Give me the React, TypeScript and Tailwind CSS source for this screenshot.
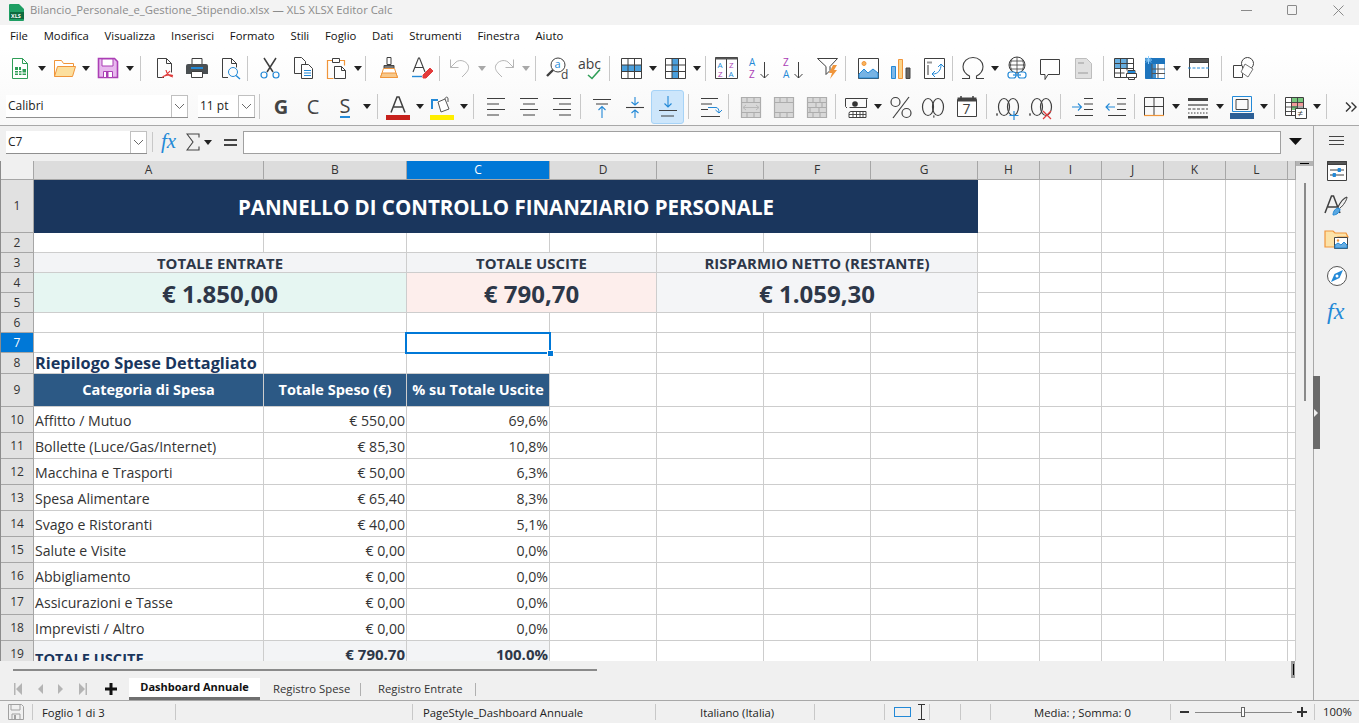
import React from "react";

const D = "#3f3f3f", B = "#2389d7", O = "#f0953a", P = "#ab3fb5", G = "#2f9e57", R = "#e03b3b", N = "#b5b5b5";

const Ico = ({ children, w = 24, h = 24 }: { children?: React.ReactNode; w?: number; h?: number }) => (
  <svg width={w} height={h} viewBox={`0 0 ${w} ${h}`} fill="none" stroke={D} strokeWidth={1} className="overflow-visible">
    {children}
  </svg>
);

const T = ({ x, y, s = 10, c = D, b, children, i, f }: { x: number; y: number; s?: number; c?: string; b?: boolean; children: string; i?: boolean; f?: string }) => (
  <text x={x} y={y} fontSize={s} fill={c} stroke="none" fontWeight={b ? 700 : 400} fontStyle={i ? "italic" : "normal"} fontFamily={f || "'Open Sans',sans-serif"}>
    {children}
  </text>
);

const Btn = ({ children, className = "w-[33px]" }: { children?: React.ReactNode; className?: string }) => (
  <div className={`flex h-[30px] shrink-0 items-center justify-center ${className}`}>{children}</div>
);
const Dd = ({ off }: { off?: boolean }) => (
  <div className="flex h-[30px] w-[11px] shrink-0 items-center justify-center">
    <svg width="8" height="5" viewBox="0 0 8 5"><path d="M0 0h8L4 5z" fill={off ? "#a8a8a8" : "#222"} /></svg>
  </div>
);
const Sep = () => <div className="h-[25px] w-px shrink-0 bg-[#c8c8c8]" />;
const Grp = ({ className, children }: { className: string; children?: React.ReactNode }) => (
  <div className={`flex shrink-0 items-center ${className}`}>{children}</div>
);

/* ---- toolbar 1 icons ---- */
const INew = () => (<Ico><path d="M4.5 2.5h10l5 5v15h-15z" stroke={G} fill="#fff" /><path d="M14.5 2.5v5h5" stroke={G} /><path d="M7 11h6v3H7zM7 15h11v4H7zM14 13h4v2h-4z" fill={G} stroke="none" /><path d="M7 17h11M10.5 11v8M14 11v8" stroke="#fff" /></Ico>);
const IOpen = () => (<Ico><path d="M2.5 20.5V4.5h7l2 3h10v3" stroke={O} fill="#fff" /><path d="M2.5 20.5l3-10h18l-3 10z" stroke={O} fill="#fcdf9e" /></Ico>);
const ISave = () => (<Ico><path d="M2.5 2.5h16l3 3v16h-19z" stroke={P} strokeWidth={1.6} fill="#e8b9ee" /><path d="M6 3h11v7H6z" fill="#fff" stroke={P} /><path d="M7.5 15.5h9v6h-9z" fill="#fff" stroke={P} /><path d="M10 16h2.5v5H10z" fill={P} stroke="none" /></Ico>);
const IPdf = () => (<Ico><path d="M12 21.5H5.5v-19h9l5 5v9" /><path d="M14.5 2.5v5h5" /><path d="M18 15c-2 3-5 5-8 6.5M14 14c.5 3 3 6 7 7M11 20.5c3-1.5 7-2 10-1" stroke={R} strokeWidth={1.2} /></Ico>);
const IPrint = () => (<Ico><path d="M7 2.5h10v6H7z" /><path d="M3 8h18a2 2 0 0 1 2 2v8H1v-8a2 2 0 0 1 2-2z" fill="#4a4f52" stroke="none" /><path d="M6 11h12v2H6z" fill={B} stroke="none" /><path d="M6.5 15.5h11v6h-11z" fill="#fff" /></Ico>);
const IPrev = () => (<Ico><path d="M10 21.5H4.5v-19h9l5 5v4" /><path d="M13.5 2.5v5h5" /><circle cx="15" cy="16" r="4.5" stroke={B} /><path d="M18 19.5l4 3.5" stroke={B} strokeWidth={1.4} /></Ico>);
const ICut = () => (<Ico><path d="M6 2l9 14M18 2L9 16" strokeWidth={1.5} /><circle cx="6" cy="19" r="3" stroke={B} strokeWidth={1.2} /><circle cx="18" cy="19" r="3" stroke={B} strokeWidth={1.2} /></Ico>);
const ICopy = () => (<Ico><path d="M10 17.5H3.5v-16h7l4 4v3" /><path d="M10.5 8.5h7l4 4v10h-11z" fill="#fff" /><path d="M13 14.5h7M13 17h7M13 19.5h7" stroke={B} /></Ico>);
const IPaste = () => (<Ico><path d="M9 4.5H3.5v18h6M15 4.5h5.5v5" stroke={O} strokeWidth={1.2} /><path d="M8.5 2.5h7v4h-7z" fill="#fff" /><path d="M10.5 10.5h7l4 4v8h-11z" fill="#fff" /><path d="M17.5 10.5v4h4" /></Ico>);
const IBrush = () => (<Ico><path d="M10 1.5h4v7h-4z" fill="#fff" /><path d="M7 9.5h10v3H7z" fill="#777" stroke="#444" /><path d="M6.5 12.5h11l3 9h-17z" stroke={O} fill="#fff" /><path d="M5 17h14l1.5 4.5h-17z" fill="#f8c88a" stroke={O} /></Ico>);
const IClear = () => (<Ico><path d="M3 16L8.500 2h1L15 16M5 11.500h8" strokeWidth={1.100} /><path d="M2 20.500h10" stroke={B} strokeWidth={1.400} /><path d="M13 19l7-7 3 3-7 7h-3z" fill="#e33b3b" stroke="#e33b3b" /></Ico>);
const IUndo = ({ flip }: { flip?: boolean }) => (<Ico><g transform={flip ? "translate(24 0) scale(-1 1)" : undefined} stroke={N}><path d="M2.500 3.500v8h8" /><path d="M2.500 11.500L8 6c4-3 10-1 12 3 1.500 3 0 6-3 9l-3 3" /></g></Ico>);
const IFind = () => (<Ico><circle cx="12" cy="9" r="7" fill="#fff" /><T x={8.500} y={12} s={11} c={B}>a</T><path d="M7 14l-6 6" strokeWidth={2.400} /><T x={15} y={23} s={12}>d</T></Ico>);
const ISpell = () => (<Ico><T x={-1} y={13} s={14}>abc</T><path d="M9 19l4 3.500 8-9" stroke={G} strokeWidth={1.600} /></Ico>);
const ITable = ({ row }: { row?: boolean }) => (<Ico><path d="M2.500 2.500h20v20h-20z" fill="#fff" />{row ? <path d="M3 9h19v6.500H3z" fill="#4a9fdc" stroke="none" /> : <path d="M9 3h6.500v19H9z" fill="#4a9fdc" stroke="none" />}<path d="M2.500 9h20M2.500 15.500h20M9 2.500v20M15.500 2.500v20" /></Ico>);
const ISort = () => (<Ico><path d="M.5 1.500h22v21H.5z" fill="#fff" /><path d="M.5 1.500h22v2H.5z" fill="#555" stroke="none" /><path d="M11.500 3v19" /><T x={2.500} y={12} s={8} c={B}>A</T><T x={3} y={21} s={8} c={P}>Z</T><T x={14} y={12} s={8} c={P}>Z</T><T x={13.500} y={21} s={8} c={B}>A</T></Ico>);
const IAz = ({ rev }: { rev?: boolean }) => (<Ico><T x={1} y={10} s={10} c={rev ? P : B}>{rev ? "Z" : "A"}</T><T x={1} y={22} s={10} c={rev ? B : P}>{rev ? "A" : "Z"}</T><path d="M16.500 6v16M12.500 18l4 4 4-4" /></Ico>);
const IFilter = () => (<Ico><path d="M1.500 2.500h20l-7.500 8v4l-4 4v-8z" fill="#fff" /><path d="M17 9l-4 8h3l-2 6 7-9h-3l3-5z" fill={O} stroke="none" /></Ico>);
const IImage = () => (<Ico><path d="M2.500 2.500h20v20h-20z" fill="#fff" /><circle cx="8" cy="7.500" r="2" fill="#f9b45c" stroke={O} /><path d="M3 22v-4l5-5 4 4 5-4 5 4v5z" fill="#76b3e4" stroke={B} /></Ico>);
const IChart = () => (<Ico><path d="M2.500 10.500h4v12h-4z" fill="#7db7e8" stroke={B} /><path d="M9.500 3.500h4v19h-4z" fill="#fbd48a" stroke={O} /><path d="M17 12h4v10.500h-4z" fill="#666" stroke="#444" /></Ico>);
const IPivot = () => (<Ico><path d="M2.500 2.500h20v20h-20z" fill="#fff" /><path d="M5 5.500h5v2H5zM5 9v10h2V9z" fill="#9a9a9a" stroke="none" /><path d="M11 18c5 0 8-4 8-9M16 11l3-3 3 3M13 15l-3 3 3 3" stroke={B} /></Ico>);
const IOmega = () => (<Ico><path d="M1 22.500h7.500v-2.500c-4-2-6.500-5-6.500-9.500a10 9 0 0 1 20 0c0 4.500-2.500 7.500-6.500 9.500v2.500H23" strokeWidth={1.100} /></Ico>);
const ILink = () => (<Ico><circle cx="12" cy="9" r="8" /><path d="M4 9h16M12 1v16M7 3c-2 4-2 8 0 12M17 3c2 4 2 8 0 12M5 5h14M5 13h14" strokeWidth={0.8} /><rect x="3" y="16" width="8" height="6" rx="2.500" fill="#fff" stroke={B} strokeWidth={1.200} /><rect x="13" y="16" width="8" height="6" rx="2.500" fill="#fff" stroke={B} strokeWidth={1.200} /><path d="M8 19h8" stroke={B} strokeWidth={1.200} /></Ico>);
const IComment = () => (<Ico><path d="M2.500 3.500h19v15H10l-3 5v-5H2.500z" fill="#fff" /></Ico>);
const INote = () => (<Ico><path d="M4.500 2.500h11l5 5v15h-16z" fill="#e0e0e0" stroke="#bdbdbd" /><path d="M7 7h6M7 17h10" stroke="#bdbdbd" strokeWidth={2} /></Ico>);
const IArea = () => (<Ico><path d="M1.500 2.500h19v19h-19z" fill="#fff" /><path d="M2 3h13v9H2z" fill="#66addf" stroke="none" /><path d="M1.500 7.500h19M1.500 12.500h19M1.500 17h10M7.500 2.500v19M14 2.500v12" /><path d="M13.500 17.500h10v4h-10z" fill="#fff" /><path d="M15 14.500h7v3h-7z" fill="#fff" /><path d="M15 15h7v2h-7z" fill={B} stroke="none" /><path d="M15.500 21.500h6v2h-6z" fill="#fff" /></Ico>);
const IFreeze = () => (<Ico><path d="M1.500 2.500h19v20h-19z" fill="#1d74bd" stroke="#1d74bd" /><path d="M8 8h12.500v14H8z" fill="#fff" stroke="none" /><path d="M8 8h4v14H8z" fill="#3d8fd0" stroke="none" /><path d="M8 13h13M8 17.500h13M14 8v14M8 8v14" stroke="#555" /><path d="M1 4h7M4.500 0v8M2 1.500l5 5M7 1.500l-5 5" stroke="#8fd0ff" /></Ico>);
const ISplit = () => (<Ico><path d="M2.500 2.500h19v19h-19z" fill="#fff" /><path d="M2.500 2.500h19v4h-19z" fill="#555" /><path d="M1 12h22" stroke={B} strokeDasharray="3 1.500" /></Ico>);
const IShapes = () => (<Ico><path d="M1.500 9.500h9v12h-9z" fill="#fff" /><circle cx="15.500" cy="7.500" r="6" fill="#fff" /><path d="M13 8l8 5-5 8-7-5z" fill="#fff" stroke="#777" /></Ico>);

/* ---- toolbar 2 icons ---- */
const ITextA = () => (<Ico><path d="M5 17.500L11 2h2l6 15.500M7.500 12h9" strokeWidth={1.500} /><path d="M0 20h24v5H0z" fill="#c7211c" stroke="none" /></Ico>);
const IFill = () => (<Ico><path d="M2 14V5h6" stroke={B} strokeWidth={2} /><path d="M8 7l7-3 4 10-8 3z" fill="#fff" stroke="#555" /><path d="M15 4c0-2 3-3 3 0v3" stroke="#555" /><path d="M0 20h24v5H0z" fill="#ffee00" stroke="none" /></Ico>);
const Lines = ({ d, d2 }: { d: string; d2?: string }) => (<Ico><path d={d} strokeWidth={1.100} />{d2 && <path d={d2} stroke={B} strokeWidth={1.100} />}</Ico>);
const IWrap = () => (<Ico><path d="M3 3.500h17M3 9h11M3 14.500h7M3 21.500h19" /><path d="M10 12.500h8c2 0 3 2 3 5M17.500 15l3.500 3 3-3" stroke={B} /></Ico>);
const IMerge = ({ v }: { v: number }) => (<Ico><path d="M2.500 2.500h19v20h-19z" fill="#d8d8d8" stroke="#adadad" strokeWidth={1.200} />
  <path d={v === 2 ? "M2.500 7.500h19M2.500 12.500h19M2.500 17.500h19M8 2.500v5M15 2.500v5M11 7.500v5M17 7.500v5M5 12.500v5M14 12.500v5M8 17.500v5M15 17.500v5" : "M2.500 7.500h19M2.500 17.500h19M8 2.500v5M15 2.500v5M8 17.500v5M15 17.500v5"} stroke="#adadad" strokeWidth={1.100} />
  {v === 0 && <path d="M4 12.500h16M7 10l-3 2.500L7 15M17 10l3 2.500-3 2.500" stroke="#b8b8b8" fill="none" />}</Ico>);
const ICur = () => (<Ico><path d="M1.500 3.500h22l-1 1v8h-17" /><path d="M1.500 3.500v8l1.500 1.500" /><circle cx="11" cy="9" r="2.800" fill="#333" stroke="none" /><path d="M5 22.500v-4a2 2 0 0 1 2-2h15v6z" fill="#fff" /><path d="M9 16.500v6M12.500 16.500v6M16 16.500v6M19 16.500v6M5 19.500h17" strokeWidth={0.900} /></Ico>);
const IPct = () => (<Ico><circle cx="6.500" cy="7" r="4.500" strokeWidth={1.200} /><circle cx="17.500" cy="18" r="4.500" strokeWidth={1.200} /><path d="M20 2L4 23" strokeWidth={1.200} /></Ico>);
const Zero = ({ x }: { x: number }) => <ellipse cx={x} cy="12" rx="5.500" ry="8.500" strokeWidth={1.200} />;
const IDec = ({ add, del }: { add?: boolean; del?: boolean }) => (
  <Ico>
    {add || del ? (<><path d="M0 19h2M0 20h2" stroke="#444" /><Zero x={8} /><Zero x={17} /></>) : (<><Zero x={6} /><Zero x={16} /><path d="M11 21h1.500M11 22h1.500" stroke="#444" /></>)}
    {add && <path d="M18 16v9M13.500 20.500h9" stroke={B} strokeWidth={1.200} />}
    {del && <path d="M14 16l8 8M22 16l-8 8" stroke={R} strokeWidth={1.200} />}
  </Ico>
);
const ICal = () => (<Ico><path d="M2.500 4.500h19v17h-19z" fill="#fff" /><path d="M2.500 2.500h19v4h-19z" fill="#444" stroke="none" /><path d="M6 1v4M18 1v4" strokeWidth={1.500} /><T x={7.500} y={19} s={14}>7</T></Ico>);
const IBorder = () => (<Ico><path d="M2.500 2.500h19v18h-19zM12 2.500v18M2.500 11.500h19" /><path d="M2 20.500h20" stroke={O} strokeWidth={1.200} /></Ico>);
const IBStyle = () => (<Ico><path d="M2 3h20v3H2z" fill="#444" stroke="none" /><path d="M2 10h20" strokeWidth={1.200} /><path d="M2 14h20" strokeDasharray="3 1.500" /><path d="M2 18h20" strokeDasharray="1.500 1.500" /><path d="M2 21h20v2.500H2z" fill="#444" stroke="none" /></Ico>);
const IBColor = () => (<Ico><path d="M2.500 1.500h19v15h-19z" stroke={B} /><path d="M6 4.500h12v10H6z" stroke="#444" /><path d="M0 18h24v6H0z" fill="#2c5f96" stroke="none" /></Ico>);
const ICond = () => (<Ico><path d="M2.500 2.500h18v18h-18z" fill="#fff" /><path d="M9 3h11v4H9z" fill="#79c97f" stroke="none" /><path d="M9 7h11v4H9z" fill="#f29b9b" stroke="none" /><path d="M9 11h5v4H9z" fill="#79c97f" stroke="none" /><path d="M9 7h-.5v13" stroke="#e33" /><path d="M2.500 7.500h18M2.500 12h18M2.500 16.500h18M8.500 2.500v18M14.500 2.500v18" strokeWidth={0.900} /><path d="M12.500 13.500h11v10h-11z" fill="#fff" /><T x={14.500} y={22} s={10}>≠</T></Ico>);
const Chev = () => (<svg width="11" height="7" viewBox="0 0 11 7" fill="none" stroke="#6a6a6a"><path d="M1 1l4.500 4.500L10 1" /></svg>);
const Combo = ({ w, children, btn = "w-[17px]" }: { w: string; children: string; btn?: string }) => (
  <div className={`flex h-[23px] shrink-0 items-stretch border-b border-[#8f8f8f] bg-white ${w}`}>
    <div className="flex flex-1 items-center pl-[2px] text-[12px] text-[#222]">{children}</div>
    <div className={`flex items-center justify-center border border-b-0 border-[#c0c0c0] ${btn}`}><Chev /></div>
  </div>
);

/* ---- sheet ---- */
const cell = "border-r border-b border-[#cdcdcd] min-w-0 overflow-hidden whitespace-nowrap";
const Blank = ({ n }: { n: number }) => (<>{Array.from({ length: n }, (_, i) => <div key={i} className={cell} />)}</>);
const Hdr = ({ n, on, className = "" }: { n: number; on?: boolean; className?: string }) => (
  <div className={`flex items-center justify-center border-r border-b border-[#a6a6a6] text-[12px] ${on ? "bg-[#0078d7] text-white" : "bg-[#e1e1e1] text-[#333]"} ${className}`}>{n}</div>
);
const Colh = ({ c, on }: { c: string; on?: boolean }) => (
  <div className={`flex items-center justify-center border-r border-b border-[#a6a6a6] text-[12px] ${on ? "bg-[#0078d7] text-white" : "bg-[#dcdcdc] text-[#333]"}`}>{c}</div>
);

const rows: [number, string, string, string][] = [
  [10, "Affitto / Mutuo", "€ 550,00", "69,6%"],
  [11, "Bollette (Luce/Gas/Internet)", "€ 85,30", "10,8%"],
  [12, "Macchina e Trasporti", "€ 50,00", "6,3%"],
  [13, "Spesa Alimentare", "€ 65,40", "8,3%"],
  [14, "Svago e Ristoranti", "€ 40,00", "5,1%"],
  [15, "Salute e Visite", "€ 0,00", "0,0%"],
  [16, "Abbigliamento", "€ 0,00", "0,0%"],
  [17, "Assicurazioni e Tasse", "€ 0,00", "0,0%"],
  [18, "Imprevisti / Altro", "€ 0,00", "0,0%"],
];

const Sheet = () => (
  <div className="relative h-[500px] w-[1296px] shrink-0 overflow-hidden border-l border-[#8c8c8c] bg-white font-['Open_Sans',sans-serif]">
    <div className="grid grid-cols-[33px_230px_143px_143px_107px_107px_107px_107px_62px_62px_62px_62px_62px_8px] grid-rows-[19px_53px_20px_20px_20px_20px_20px_20px_21px_33px_26px_26px_26px_26px_26px_26px_26px_26px_26px_26px]">
      <div className="border-r border-b border-[#a6a6a6] bg-[#f0f0f0]" />
      {["A", "B", "C", "D", "E", "F", "G", "H", "I", "J", "K", "L", ""].map((c) => <Colh key={c} c={c} on={c === "C"} />)}

      <Hdr n={1} />
      <div className="col-span-7 flex items-center justify-center bg-[#1a365d] pt-[1px] text-[20.500px] font-bold text-white">PANNELLO DI CONTROLLO FINANZIARIO PERSONALE</div>
      <Blank n={6} />

      <Hdr n={2} /><Blank n={13} />

      <Hdr n={3} />
      <div className={`col-span-2 flex items-center justify-center bg-[#f3f4f6] pt-[1px] text-[14.900px] font-bold text-[#2d3748] ${cell}`}>TOTALE ENTRATE</div>
      <div className={`col-span-2 flex items-center justify-center bg-[#f3f4f6] pt-[1px] text-[14.900px] font-bold text-[#2d3748] ${cell}`}>TOTALE USCITE</div>
      <div className={`col-span-3 flex items-center justify-center bg-[#f3f4f6] pt-[1px] text-[14.900px] font-bold text-[#2d3748] ${cell}`}>RISPARMIO NETTO (RESTANTE)</div>
      <Blank n={6} />

      <Hdr n={4} />
      <div className={`col-span-2 row-span-2 flex items-center justify-center bg-[#e6f6f2] pt-[3px] text-[24px] font-bold text-[#2d3748] ${cell}`}>€ 1.850,00</div>
      <div className={`col-span-2 row-span-2 flex items-center justify-center bg-[#fdeeec] pt-[3px] text-[24px] font-bold text-[#2d3748] ${cell}`}>€ 790,70</div>
      <div className={`col-span-3 row-span-2 flex items-center justify-center bg-[#f4f5f7] pt-[3px] text-[24px] font-bold text-[#2d3748] ${cell}`}>€ 1.059,30</div>
      <Blank n={6} />
      <Hdr n={5} /><Blank n={6} />

      <Hdr n={6} /><Blank n={13} />
      <Hdr n={7} on /><Blank n={13} />

      <Hdr n={8} />
      <div className={`flex items-center pl-[1px] text-[16.300px] font-bold text-[#1a365d] ${cell}`}>Riepilogo Spese Dettagliato</div>
      <Blank n={12} />

      <Hdr n={9} />
      <div className={`flex items-center justify-center bg-[#2c5985] text-[14.500px] font-bold text-white ${cell}`}>Categoria di Spesa</div>
      <div className={`flex items-center justify-center bg-[#2c5985] text-[14.500px] font-bold text-white ${cell}`}>Totale Speso (€)</div>
      <div className={`flex items-center justify-center bg-[#2c5985] text-[14.500px] font-bold text-white ${cell}`}>% su Totale Uscite</div>
      <Blank n={10} />

      {rows.map(([n, a, b, c]) => (
        <React.Fragment key={n}>
          <Hdr n={n} />
          <div className={`flex items-center pt-[2px] pl-[1px] text-[14.100px] text-[#333] ${cell}`}>{a}</div>
          <div className={`flex items-center justify-end pt-[2px] pr-[1px] text-[14.100px] text-[#333] ${cell}`}>{b}</div>
          <div className={`flex items-center justify-end pt-[2px] pr-[1px] text-[14.100px] text-[#333] ${cell}`}>{c}</div>
          <Blank n={10} />
        </React.Fragment>
      ))}

      <Hdr n={19} />
      <div className={`flex items-center bg-[#f3f4f6] pt-[10px] pl-[1px] text-[14.600px] font-bold text-[#1a365d] ${cell}`}>TOTALE USCITE</div>
      <div className={`flex items-center justify-end bg-[#f3f4f6] pt-[2px] pr-[1px] text-[15px] font-bold text-[#2d3748] ${cell}`}>€ 790.70</div>
      <div className={`flex items-center justify-end bg-[#f3f4f6] pt-[2px] pr-[1px] text-[15px] font-bold text-[#2d3748] ${cell}`}>100.0%</div>
      <Blank n={10} />
    </div>
    <div className="absolute top-[171px] left-[404px] h-[22px] w-[146px] border-2 border-[#0078d7]" />
    <div className="absolute top-[189px] left-[546px] box-content h-[5px] w-[5px] border border-white bg-[#0078d7]" />
  </div>
);

const Nav = ({ d }: { d: string }) => (
  <svg width="10" height="14" viewBox="0 0 10 14" className="shrink-0"><path d={d} fill="#b4b4b4" stroke="none" /></svg>
);

const SideBtn = ({ children, className = "h-[35px]" }: { children: React.ReactNode; className?: string }) => (
  <div className={`flex w-full items-center justify-center ${className}`}>{children}</div>
);

export default function App() {
  return (
    <div className="relative flex h-[723px] w-[1359px] flex-col overflow-hidden bg-[#f0f0f0] font-['Open_Sans',sans-serif] text-[#1a1a1a]">
      {/* title bar */}
      <div className="flex h-[25px] shrink-0 items-center bg-[#f3f3f3] pb-[5px] pl-[9px]">
        <svg width="16" height="17" viewBox="0 0 16 17" className="translate-y-[2px]"><path d="M1 0h9l5 5v11a1 1 0 0 1-1 1H1a1 1 0 0 1-1-1V1a1 1 0 0 1 1-1z" fill="#1e9e63" /><path d="M1 8h14v7H1z" fill="#0e6b3f" /><text x="2" y="14" fontSize="5.500" fontWeight="700" fill="#fff" fontFamily="'Open Sans',sans-serif">XLS</text></svg>
        <span className="ml-[5px] text-[11.300px] text-[#8b8b8b]">Bilancio_Personale_e_Gestione_Stipendio.xlsx — XLS XLSX Editor Calc</span>
        <div className="ml-auto flex items-center">
          <div className="h-px w-[11px] bg-[#8a8a8a]" />
          <div className="ml-[35px] h-[10px] w-[10px] rounded-[1px] border border-[#8a8a8a]" />
          <svg width="11" height="11" viewBox="0 0 11 11" stroke="#8a8a8a" className="mr-[15px] ml-[36px]"><path d="M.5.5l10 10M10.500.5l-10 10" /></svg>
        </div>
      </div>

      {/* menu */}
      <div className="flex h-[23px] shrink-0 items-center gap-[15.800px] bg-white pl-[10px] text-[11.300px] text-[#111]">
        {["File", "Modifica", "Visualizza", "Inserisci", "Formato", "Stili", "Foglio", "Dati", "Strumenti", "Finestra", "Aiuto"].map((m) => <span key={m}>{m}</span>)}
      </div>

      {/* toolbars */}
      <div className="h-[78px] shrink-0 border-b border-[#a8a8a8] bg-gradient-to-b from-white to-[#f8f8f8]">
        <div className="flex h-[40px] items-center">
          <Grp className="w-[140px] pl-[3px]"><Btn><INew /></Btn><Dd /><Btn><IOpen /></Btn><Dd /><Btn><ISave /></Btn><Dd /></Grp><Sep />
          <Grp className="w-[106px] pl-[6px]"><Btn><IPdf /></Btn><Btn><IPrint /></Btn><Btn><IPrev /></Btn></Grp><Sep />
          <Grp className="w-[117px] pl-[5px]"><Btn><ICut /></Btn><Btn><ICopy /></Btn><Btn><IPaste /></Btn><Dd /></Grp><Sep />
          <Grp className="w-[73px] pl-[6px]"><Btn><IBrush /></Btn><Btn><IClear /></Btn></Grp><Sep />
          <Grp className="w-[95px] pl-[3px]"><Btn><IUndo /></Btn><Dd off /><Btn><IUndo flip /></Btn><Dd off /></Grp><Sep />
          <Grp className="w-[73px] pl-[5px]"><Btn><IFind /></Btn><Btn><ISpell /></Btn></Grp><Sep />
          <Grp className="w-[95px] pl-[4px]"><Btn><ITable row /></Btn><Dd /><Btn><ITable /></Btn><Dd /></Grp><Sep />
          <Grp className="w-[139px] pl-[4px]"><Btn><ISort /></Btn><Btn className="w-[34px]"><IAz /></Btn><Btn className="w-[34px]"><IAz rev /></Btn><Btn><IFilter /></Btn></Grp><Sep />
          <Grp className="w-[106px] pl-[5px]"><Btn><IImage /></Btn><Btn><IChart /></Btn><Btn><IPivot /></Btn></Grp><Sep />
          <Grp className="w-[150px] pl-[3px]"><Btn><IOmega /></Btn><Dd /><Btn><ILink /></Btn><Btn><IComment /></Btn><Btn><INote /></Btn></Grp><Sep />
          <Grp className="w-[117px] pl-[5px]"><Btn className="w-[31px]"><IArea /></Btn><Btn className="w-[31px]"><IFreeze /></Btn><Dd /><Btn><ISplit /></Btn></Grp><Sep />
          <Grp className="pl-[5px]"><Btn><IShapes /></Btn></Grp>
        </div>
        <div className="flex h-[37px] items-center">
          <Grp className="w-[259px] gap-[10px] pl-[6px]"><Combo w="w-[182px]">Calibri</Combo><Combo w="w-[57px]">11 pt</Combo></Grp><Sep />
          <Grp className="w-[117px] pl-[5px] text-[20px] text-[#444]">
            <Btn className="w-[32px] font-bold">G</Btn><Btn className="w-[32px]">C</Btn>
            <Btn className="w-[32px]"><span className="border-b-2 border-[#2389d7] leading-[21px]">S</span></Btn><Dd />
          </Grp><Sep />
          <Grp className="w-[95px] pl-[3px]"><Btn><ITextA /></Btn><Dd /><Btn><IFill /></Btn><Dd /></Grp><Sep />
          <Grp className="w-[106px] pl-[5px]">
            <Btn><Lines d="M3 3.500h18M3 9h12M3 14.500h18M3 20h12" /></Btn>
            <Btn><Lines d="M3 3.500h18M6 9h12M3 14.500h18M6 20h12" /></Btn>
            <Btn><Lines d="M3 3.500h18M9 9h12M3 14.500h18M9 20h12" /></Btn>
          </Grp><Sep />
          <Grp className="w-[107px] pl-[4px]">
            <Btn><Lines d="M3 4.500h18M6 9h12" d2="M12 23V11.500M8.500 15l3.500-3.500 3.500 3.500" /></Btn>
            <Btn><Lines d="M3 12.500h18" d2="M12 2v8M8.500 7l3.500 3 3.500-3M12 23v-8M8.500 18l3.500-3 3.500 3" /></Btn>
            <Btn className="h-[34px] w-[33px] rounded-[3px] border border-[#a6d3f7] bg-[#cde6fb]"><Lines d="M3 15.500h18M5 21h13" d2="M12 1v11M8.500 8.500L12 12l3.500-3.500" /></Btn>
          </Grp><Sep />
          <Grp className="w-[39px] pl-[4px]"><Btn><IWrap /></Btn></Grp><Sep />
          <Grp className="w-[106px] pl-[5px]"><Btn><IMerge v={0} /></Btn><Btn><IMerge v={1} /></Btn><Btn><IMerge v={2} /></Btn></Grp><Sep />
          <Grp className="w-[150px] pl-[3px]"><Btn><ICur /></Btn><Dd /><Btn className="ml-[1px] w-[33px]"><IPct /></Btn><Btn><IDec /></Btn><Btn><ICal /></Btn></Grp><Sep />
          <Grp className="w-[73px] pl-[4px]"><Btn><IDec add /></Btn><Btn><IDec del /></Btn></Grp><Sep />
          <Grp className="w-[73px] pl-[5px]">
            <Btn><Lines d="M13 3.500h9M13 9h9M13 14.500h9M4 20.500h18" d2="M1 12h9M7 8.500l3.500 3.500L7 15.500" /></Btn>
            <Btn><Lines d="M13 3.500h9M13 9h9M13 14.500h9M4 20.500h18" d2="M11 12H2M5.500 8.500L2 12l3.500 3.500" /></Btn>
          </Grp><Sep />
          <Grp className="w-[139px] pl-[2px]"><Btn><IBorder /></Btn><Dd /><Btn><IBStyle /></Btn><Dd /><Btn><IBColor /></Btn><Dd /></Grp><Sep />
          <Grp className="w-[51px] pl-[3px]"><Btn><ICond /></Btn><Dd /></Grp><Sep />
          <Grp className="flex-1 justify-end pr-[2px]">
            <svg width="12" height="10" viewBox="0 0 12 10" fill="none" stroke="#333" strokeWidth={1.400}><path d="M1 .5L5.500 5 1 9.500M6.500.5L11 5 6.500 9.500" /></svg>
          </Grp>
        </div>
      </div>

      {/* main */}
      <div className="flex min-h-0 flex-1">
        <div className="flex w-[1313px] shrink-0 flex-col">
          {/* formula bar */}
          <div className="flex h-[35px] shrink-0 items-center pb-[3px] pl-[6px]">
            <Combo w="w-[141px]">C7</Combo>
            <div className="ml-[5px] h-[20px] w-px bg-[#c8c8c8]" />
            <div className="flex w-[33px] justify-center"><svg width="22" height="22" viewBox="0 0 22 22" className="overflow-visible"><T x={2} y={17} s={21} c={B} i f="'Liberation Serif',serif">fx</T></svg></div>
            <svg width="14" height="18" viewBox="0 0 14 18" fill="none" stroke="#444" strokeWidth={1.100} className="shrink-0"><path d="M13 4.500V1H1l6 8-6 8h12v-3.500" /></svg>
            <div className="ml-[2px]"><Dd /></div>
            <div className="ml-[11px] flex w-[13px] flex-col gap-[3px]"><div className="h-[2px] bg-[#444]" /><div className="h-[2px] bg-[#444]" /></div>
            <div className="ml-[6px] h-[23px] w-[1038px] border border-[#a0a0a0] bg-white" />
            <svg width="13" height="8" viewBox="0 0 13 8" className="ml-[8px]"><path d="M0 0h13L6.500 7z" fill="#111" /></svg>
          </div>
          <div className="flex h-[500px] shrink-0">
            <Sheet />
            <div className="relative flex w-[17px] justify-center">
              <div className="absolute top-0 left-0 flex h-[5px] w-[17px] items-center justify-center bg-[#b4b4b4]"><div className="h-px w-[9px] bg-black" /></div>
              <div className="mt-[22px] h-[218px] w-[2px] bg-[#8a8a8a]" />
            </div>
          </div>
          {/* h scroll */}
          <div className="relative flex h-[17px] shrink-0 items-center">
            <div className="ml-[13px] h-[2px] w-[584px] bg-[#8a8a8a]" />
            <div className="absolute top-0 left-[1291px] flex h-[17px] w-[4px] items-center justify-center bg-[#9a9a9a]"><div className="h-[11px] w-px bg-black" /></div>
          </div>
          {/* tabs */}
          <div className="flex h-[22px] shrink-0 items-center text-[11.300px]">
            <div className="flex w-[129px] items-center">
              <div className="ml-[13px] w-[22px]"><Nav d="M1 1h1.500v12H1zM9 1v12L3 7z" /></div>
              <div className="w-[21px]"><Nav d="M8 2v10L3 7z" /></div>
              <div className="w-[22px]"><Nav d="M2 2v10l5-5z" /></div>
              <div className="w-[26px]"><Nav d="M1 1v12l6-6zM7.500 1H9v12H7.500z" /></div>
              <svg width="14" height="14" viewBox="0 0 14 14"><path d="M5.500 1h3v4.500H13v3H8.500V13h-3V8.500H1v-3h4.500z" fill="#111" /></svg>
            </div>
            <div className="flex h-[22px] w-[131px] items-center justify-center border-b-[3px] border-[#707070] bg-white text-[11px] font-bold text-[#111]">Dashboard Annuale</div>
            <div className="ml-[13px] w-[87px] text-[#333]">Registro Spese</div>
            <div className="h-[13px] w-px bg-[#b0b0b0]" />
            <div className="ml-[17px] w-[97px] text-[#333]">Registro Entrate</div>
            <div className="h-[13px] w-px bg-[#b0b0b0]" />
          </div>
        </div>

        {/* sidebar */}
        <div className="relative flex min-w-0 flex-1 flex-col items-center border-l border-[#a8a8a8] pt-[1px]">
          <SideBtn className="h-[26px]"><div className="flex w-[15px] flex-col gap-[3px]"><div className="h-px bg-[#444]" /><div className="h-px bg-[#444]" /><div className="h-px bg-[#444]" /></div></SideBtn>
          <SideBtn><Ico w={20} h={20}><path d="M.5.5h19v19H.5z" fill="#fff" /><path d="M.5.5h19v3H.5z" fill="#555" /><path d="M3 9h14M3 14h14" /><path d="M11 7.500h2.500v3H11zM6 12.500h2.500v3H6z" fill={B} stroke={B} /></Ico></SideBtn>
          <SideBtn><Ico><path d="M0 19L6.500 2h2L15 19M3 13h9" strokeWidth={1.500} /><path d="M22 3c-3 1-7 6-9 10" strokeWidth={1.200} /><path d="M22 3c0 3-4 9-7 11" strokeWidth={1} /><path d="M8 21c0-4 3-7 5-7l2 1c0 3-3 6-7 6z" fill="#5aa7e0" stroke={B} /></Ico></SideBtn>
          <SideBtn><Ico><path d="M0 16V2h8l2 2h11l2 4h-10v10H0z" fill="#fce2a8" stroke={O} strokeWidth={1.200} /><path d="M9.500 8.500h13v11h-13z" fill="#fff" stroke="#444" /><circle cx="13" cy="11.500" r="1.200" fill={O} stroke="none" /><path d="M10 19v-3l3-2 3 2 3-3 3 3v3z" fill="#69aee2" stroke={B} /></Ico></SideBtn>
          <SideBtn><Ico w={20} h={20}><circle cx="10" cy="10" r="9.500" fill="#fff" stroke="#555" /><path d="M16 4l-3.500 8L4 16l3.500-8z" fill={B} stroke="none" /><circle cx="10" cy="10" r="1.500" fill="#fff" stroke="none" /></Ico></SideBtn>
          <SideBtn><svg width="24" height="24" viewBox="0 0 24 24" className="overflow-visible"><T x={2} y={20} s={24} c={B} i f="'Liberation Serif',serif">fx</T></svg></SideBtn>
          <div className="absolute top-[250px] left-[-1px] flex h-[73px] w-[7px] items-center bg-[#6a6a6a]">
            <svg width="6" height="8" viewBox="0 0 6 8"><path d="M1 0l4 4-4 4z" fill="#eee" /></svg>
          </div>
        </div>
      </div>

      {/* status bar */}
      <div className="flex h-[23px] shrink-0 items-center border-t border-[#a8a8a8] text-[11.300px] text-[#222]">
        <div className="flex h-[16px] w-[33px] items-center justify-center border-r border-[#c8c8c8]">
          <svg width="16" height="16" viewBox="0 0 16 16" fill="none" stroke="#a0a0a0"><path d="M.5.500h13l2 2v13H.5z" /><path d="M3 1v5h9V1M4 15v-5h8v5" /><path d="M6 11h2v4H6z" fill="#a0a0a0" stroke="none" /></svg>
        </div>
        <div className="h-[16px] w-[143px] border-r border-[#c8c8c8] pl-[9px] leading-[17px]">Foglio 1 di 3</div>
        <div className="h-[16px] w-[237px] border-r border-[#c8c8c8]" />
        <div className="h-[16px] w-[243px] border-r border-[#c8c8c8] pl-[10px] leading-[17px]">PageStyle_Dashboard Annuale</div>
        <div className="h-[16px] w-[159px] border-r border-[#c8c8c8] pl-[44px] leading-[17px]">Italiano (Italia)</div>
        <div className="h-[16px] w-[70px] border-r border-[#c8c8c8]" />
        <div className="flex h-[16px] w-[45px] items-center gap-[7px] border-r border-[#c8c8c8] pl-[9px]">
          <div className="h-[10px] w-[17px] border border-[#2389d7]" />
          <svg width="7" height="16" viewBox="0 0 7 16" fill="none" stroke="#333"><path d="M0 .5h7M3.500.5v15M0 15.500h7" /></svg>
        </div>
        <div className="h-[16px] w-[31px] border-r border-[#c8c8c8]" />
        <div className="h-[16px] w-[30px] border-r border-[#c8c8c8]" />
        <div className="h-[16px] w-[180px] border-r border-[#c8c8c8] pl-[43px] leading-[17px]">Media: ; Somma: 0</div>
        <div className="flex h-[16px] w-[144px] items-center border-r border-[#c8c8c8] pl-[9px]">
          <div className="h-[2px] w-[9px] bg-[#333]" />
          <div className="relative ml-[6px] flex h-[10px] w-[97px] items-center">
            <div className="h-px w-full bg-[#888]" />
            <div className="absolute left-[46px] h-[10px] w-[4px] border border-[#666] bg-white" />
          </div>
          <svg width="10" height="10" viewBox="0 0 10 10" className="ml-[5px]"><path d="M4 0h2v4h4v2H6v4H4V6H0V4h4z" fill="#333" /></svg>
        </div>
        <div className="pl-[8px]">100%</div>
      </div>
    </div>
  );
}
